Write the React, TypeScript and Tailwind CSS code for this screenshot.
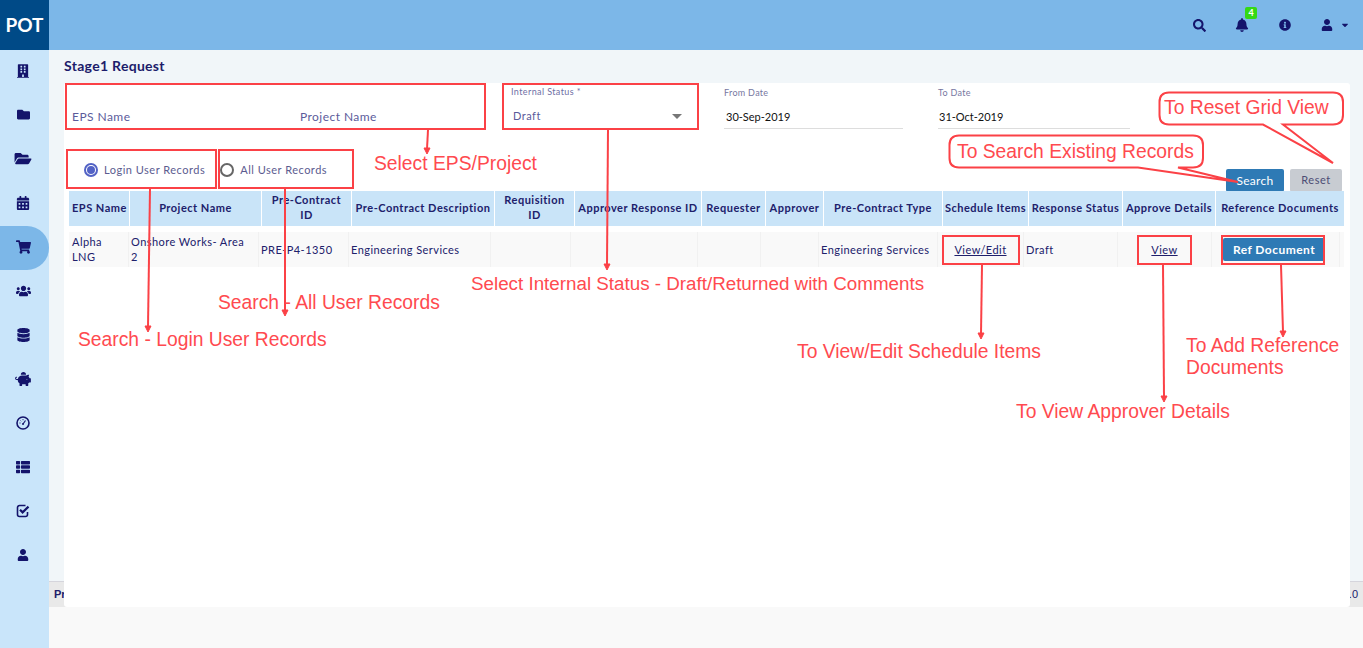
import { FaBell, FaBuilding, FaCalendarAlt, FaCaretDown, FaDatabase, FaFolder, FaFolderOpen, FaInfoCircle, FaPiggyBank, FaSearch, FaShoppingCart, FaThList, FaUser, FaUsers } from 'react-icons/fa';

const Gauge = ({ className }: { className?: string }) => (
  <svg viewBox="0 0 14 14" className={className} fill="none" stroke="currentColor">
    <circle cx="7" cy="7" r="6" strokeWidth="1.6" />
    <path d="M7 8 L9.5 4.5" strokeWidth="1.2" />
    <circle cx="7" cy="8" r="1" fill="currentColor" stroke="none" />
    <path d="M3.5 7h1M7 3.2v1M4.6 4.6l.6.6" strokeWidth="1" />
  </svg>
);

const CheckBox = ({ className }: { className?: string }) => (
  <svg viewBox="0 0 14 14" className={className} fill="none" stroke="currentColor">
    <path d="M11.5 8v2.5a2 2 0 0 1-2 2h-6a2 2 0 0 1-2-2v-7a2 2 0 0 1 2-2h6" strokeWidth="1.6" />
    <path d="M4 5.8l2.6 2.6L12.5 2.6" strokeWidth="2.2" />
  </svg>
);

const sideIcons = [
  { Icon: FaBuilding, size: 'h-[14px] w-[12px]' },
  { Icon: FaFolder, size: 'h-[13px] w-[13px]' },
  { Icon: FaFolderOpen, size: 'h-[15px] w-[18px]' },
  { Icon: FaCalendarAlt, size: 'h-[14px] w-[14px]' },
  { Icon: FaShoppingCart, size: 'h-[14px] w-[15px]' },
  { Icon: FaUsers, size: 'h-[14px] w-[15px]' },
  { Icon: FaDatabase, size: 'h-[14px] w-[13px]' },
  { Icon: FaPiggyBank, size: 'h-[14px] w-[16px]' },
  { Icon: Gauge, size: 'h-[14px] w-[14px]' },
  { Icon: FaThList, size: 'h-[14px] w-[14px]' },
  { Icon: CheckBox, size: 'h-[14px] w-[14px]' },
  { Icon: FaUser, size: 'h-[12px] w-[12px]' },
];

const headCols = 'grid-cols-[60px_131px_89px_142px_79px_126px_63px_57px_118px_85px_93px_92px_128px]';
const rowCols = 'grid-cols-[59px_129px_89px_141px_79px_126px_62px_57px_118px_85px_93px_93px_127px_4px]';

const headers = ['EPS Name', 'Project Name', 'Pre-Contract\nID', 'Pre-Contract Description', 'Requisition\nID', 'Approver Response ID', 'Requester', 'Approver', 'Pre-Contract Type', 'Schedule Items', 'Response Status', 'Approve Details', 'Reference Documents'];

const boxes = [
  'left-[65px] top-[83px] w-[421px] h-[47px]',
  'left-[66px] top-[149px] w-[151px] h-[40px]',
  'left-[218px] top-[149px] w-[136px] h-[40px]',
  'left-[502px] top-[83px] w-[197px] h-[47px]',
  'left-[942px] top-[235px] w-[78px] h-[30px]',
  'left-[1137px] top-[235px] w-[55px] h-[30px]',
  'left-[1221px] top-[235px] w-[104px] h-[30px]',
];

const notes = [
  { text: 'Select EPS/Project', pos: 'left-[374px] top-[153px]' },
  { text: 'Search - Login User Records', pos: 'left-[78px] top-[329px]' },
  { text: 'Search - All User Records', pos: 'left-[218px] top-[292px]' },
  { text: 'Select Internal Status - Draft/Returned with Comments', pos: 'left-[471px] top-[273px] text-[18.8px]' },
  { text: 'To View/Edit Schedule Items', pos: 'left-[797px] top-[341px]' },
  { text: 'To View Approver Details', pos: 'left-[1016px] top-[401px]' },
  { text: 'To Add Reference', pos: 'left-[1186px] top-[335px]' },
  { text: 'Documents', pos: 'left-[1186px] top-[357px]' },
  { text: 'To Reset Grid View', pos: 'left-[1164px] top-[97px]' },
  { text: 'To Search Existing Records', pos: 'left-[957px] top-[141px]' },
];

const arrows = [
  [428, 130, 427, 154],
  [150, 189, 148, 332],
  [285, 189, 285, 316],
  [608, 129, 607, 270],
  [982, 265, 981, 339],
  [1163, 265, 1164, 402],
  [1281, 265, 1283, 337],
];

function Annotations() {
  return (
    <div className="pointer-events-none absolute inset-0 z-20 font-['Liberation_Sans',sans-serif] text-[19.3px] leading-[21px] text-[#ff4a4f]">
      {boxes.map((pos) => (
        <div key={pos} className={`absolute border-2 border-[#fb4146] ${pos}`} />
      ))}
      <svg width="1363" height="648" className="absolute left-0 top-0" fill="none" stroke="#fb4146" strokeWidth="2">
        {arrows.map(([x1, y1, x2, y2]) => (
          <g key={x1}>
            <path d={`M${x1} ${y1} L${x2} ${y2 - 5}`} />
            <path d={`M${x2 - 3} ${y2 - 6} L${x2 + 3} ${y2 - 6} L${x2} ${y2} Z`} fill="#fb4146" strokeWidth="1" />
          </g>
        ))}
        <path fill="#fff" d="M1169 92.5 H1333 Q1343 92.5 1343 102 V115 Q1343 124.5 1333 124.5 H1283 L1333 163 L1263 124.5 H1169 Q1159.5 124.5 1159.5 115 V102 Q1159.5 92.5 1169 92.5 Z" />
        <path fill="#fff" d="M959 135.5 H1193 Q1203 135.5 1203 145 V158 Q1203 167.5 1193 167.5 H1178 L1238 182 L1138 167.5 H959 Q949.5 167.5 949.5 158 V145 Q949.5 135.5 959 135.5 Z" />
      </svg>
      {notes.map((note) => (
        <div key={note.text} className={`absolute whitespace-nowrap ${note.pos}`}>
          {note.text}
        </div>
      ))}
    </div>
  );
}

export default function App() {
  return (
    <div className="relative flex h-[648px] w-[1363px] overflow-hidden bg-[#f9f9f9] font-['Lato',sans-serif] text-[#1c1c6b]">
      <aside className="flex w-[49px] shrink-0 flex-col bg-[#c9e5fa]">
        <div className="flex h-[50px] items-center justify-center bg-[#004a87] text-[19px] font-bold text-white">POT</div>
        <nav className="flex flex-col">
          {sideIcons.map(({ Icon, size }, i) => (
            <div key={i} className={`flex h-[44px] items-center justify-center pb-[3px] pr-[3px] ${i === 4 ? 'rounded-r-[22px] bg-[#7cb7e8]' : ''}`}>
              <Icon className={`text-[#14146b] ${size}`} />
            </div>
          ))}
        </nav>
      </aside>

      <div className="flex min-w-0 flex-1 flex-col">
        <header className="flex h-[50px] items-center justify-end bg-[#7cb7e8] pr-[13px]">
          <FaSearch className="mr-[29px] h-[13px] w-[13px] text-[#14146b]" />
          <div className="relative mr-[30px]">
            <FaBell className="h-[14px] w-[14px] text-[#14146b]" />
            <span className="absolute left-[10px] top-[-11px] flex h-[12px] w-[12px] items-center justify-center rounded-[2px] bg-[#35d914] text-[9px] font-bold text-white">4</span>
          </div>
          <FaInfoCircle className="mr-[30px] h-[12px] w-[12px] text-[#14146b]" />
          <FaUser className="h-[12px] w-[12px] text-[#14146b]" />
          <FaCaretDown className="ml-[7px] h-[10px] w-[10px] text-[#14146b]" />
        </header>

        <main className="relative h-[557px] bg-[#f1f6f9] px-[15px]">
          <h1 className="h-[33px] pt-[8px] text-[14px] font-bold leading-[16px] tracking-[0.3px]">Stage1 Request</h1>

          <section className="relative z-10 h-[524px] w-[1286px] rounded-[3px] bg-white">
            <div className="flex h-[47px]">
              <div className="w-[236px] pl-[8px] pt-[25px] text-[12px] tracking-[0.45px] text-[#5b5b9b]">EPS Name</div>
              <div className="w-[211px] pt-[25px] text-[12px] tracking-[0.45px] text-[#5b5b9b]">Project Name</div>
              <div className="w-[213px] pr-[24px] pt-[3px]">
                <div className="text-[9px] leading-[12px] tracking-[0.4px] text-[#6f6fa5]">Internal Status *</div>
                <div className="mt-[11px] flex items-center justify-between pl-[2px] pr-[18px] text-[11px] leading-[14px] tracking-[0.5px] text-[#5b5b9b]">
                  Draft
                  <span className="h-0 w-0 border-x-[5px] border-t-[5px] border-x-transparent border-t-[#777]" />
                </div>
              </div>
              <div className="w-[214px] pt-[4px]">
                <div className="text-[9px] leading-[12px] tracking-[0.3px] text-[#77779f]">From Date</div>
                <div className="mt-[11px] h-[19px] w-[179px] border-b border-[#ddd] pl-[2px] text-[11px] leading-[14px] text-[#111]">30-Sep-2019</div>
              </div>
              <div className="w-[192px] pt-[4px]">
                <div className="text-[9px] leading-[12px] tracking-[0.3px] text-[#77779f]">To Date</div>
                <div className="mt-[11px] h-[19px] border-b border-[#ddd] pl-[1px] text-[11px] leading-[14px] text-[#111]">31-Oct-2019</div>
              </div>
            </div>

            <div className="flex h-[61px] items-end">
              <div className="mb-[14px] ml-[20px] flex items-center">
                <span className="flex h-[14px] w-[14px] items-center justify-center rounded-full border-2 border-[#5262c5]">
                  <span className="h-[8px] w-[8px] rounded-full bg-[#5262c5]" />
                </span>
                <span className="ml-[6px] text-[11px] leading-[14px] tracking-[0.5px] text-[#5b5b8f]">Login User Records</span>
              </div>
              <div className="mb-[14px] ml-[15px] flex items-center">
                <span className="h-[14px] w-[14px] rounded-full border-2 border-[#666]" />
                <span className="ml-[6px] text-[11px] leading-[14px] tracking-[0.5px] text-[#5b5b8f]">All User Records</span>
              </div>
              <div className="mb-[-1px] ml-auto flex gap-[6px] pr-[8px]">
                <button className="h-[23px] w-[58px] rounded-[2px] bg-[#2e7ab5] text-[12px] tracking-[0.3px] text-white">Search</button>
                <button className="h-[23px] w-[52px] rounded-[2px] bg-[#c8ccd2] text-[11px] tracking-[0.5px] text-[#4d4d75]">Reset</button>
              </div>
            </div>

            <div className="ml-[5px] w-[1275px]">
              <div className={`grid h-[35px] gap-x-[1px] ${headCols}`}>
                {headers.map((h) => (
                  <div key={h} className={`flex items-center whitespace-pre-line bg-[#c9e4f8] pb-[3px] text-center text-[11px] font-bold leading-[15px] tracking-[0.5px] text-[#20206b] ${h === 'EPS Name' ? 'justify-start pl-[3px]' : 'justify-center'}`}>
                    <span>{h}</span>
                  </div>
                ))}
              </div>
              <div className={`mt-[6px] grid h-[35px] gap-x-[1px] bg-[#f1f1f1] text-[11px] leading-[15px] tracking-[0.45px] text-[#20206b] ${rowCols}`}>
                <div className="flex items-center bg-[#f9f9f9] pb-[1px] pl-[3px] pr-[5px]">Alpha LNG</div>
                <div className="flex items-center bg-[#f9f9f9] pb-[1px] pl-[2px] pr-[8px]">Onshore Works- Area 2</div>
                <div className="flex items-center bg-[#f9f9f9] pb-[1px] pl-[2px]">PRE-P4-1350</div>
                <div className="flex items-center bg-[#f9f9f9] pb-[1px] pl-[2px]">Engineering Services</div>
                <div className="bg-[#f9f9f9]" />
                <div className="bg-[#f9f9f9]" />
                <div className="bg-[#f9f9f9]" />
                <div className="bg-[#f9f9f9]" />
                <div className="flex items-center bg-[#f9f9f9] pb-[1px] pl-[2px]">Engineering Services</div>
                <div className="flex items-center justify-center bg-[#f9f9f9] pb-[1px] underline">View/Edit</div>
                <div className="flex items-center bg-[#f9f9f9] pb-[1px] pl-[2px]">Draft</div>
                <div className="flex items-center justify-center bg-[#f9f9f9] pb-[1px] underline">View</div>
                <div className="flex items-center bg-[#f9f9f9] pl-[11px]">
                  <button className="h-[23px] w-[102px] rounded-[2px] bg-[#2e7ab5] text-[12px] font-bold text-white">Ref Document</button>
                </div>
                <div className="bg-[#f9f9f9]" />
              </div>
            </div>
          </section>

          <footer className="absolute inset-x-0 bottom-0 flex h-[26px] items-center justify-between border-t border-[#d5d5dc] bg-[#e9e9e9] px-[5px] font-['Liberation_Sans',sans-serif] text-[11px] text-[#20206b]">
            <span className="font-bold">Project</span>
            <span>v1.0</span>
          </footer>
        </main>
      </div>

      <Annotations />
    </div>
  );
}
